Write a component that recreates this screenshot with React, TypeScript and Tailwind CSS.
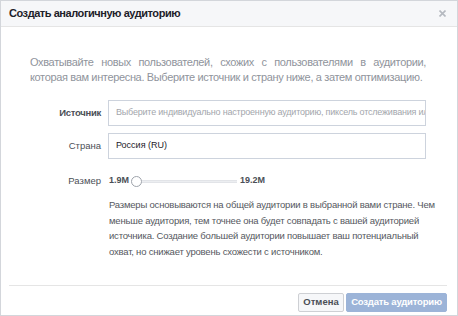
import React from 'react';

const font = { fontFamily: '"Liberation Sans", Arial, sans-serif' };

const Row: React.FC<{ label: string; bold?: boolean; children: React.ReactNode; className?: string; labelClass?: string }> = ({
  label,
  bold,
  children,
  className,
  labelClass,
}) => (
  <div className={`flex items-center ${className ?? ''}`}>
    <div className={`w-[71px] mr-[7px] text-right text-[#4b4f56] ${bold ? 'font-bold' : ''} ${labelClass ?? ''}`}>{label}</div>
    <div className="flex-1 min-w-0">{children}</div>
  </div>
);

export default function App() {
  return (
    <div className="w-[458px] h-[316px] bg-white border border-[#d3d6db] flex flex-col overflow-hidden" style={font}>
      {/* Header */}
      <div className="h-[26px] shrink-0 bg-[#f6f7f9] border-b border-[#e5e5e5] flex items-center justify-between pl-[8px] pr-[11px]">
        <span className="text-[11px] font-bold tracking-[-0.45px] text-[#1d2129]">Создать аналогичную аудиторию</span>
        <svg width="7" height="7" viewBox="0 0 7 7" className="text-[#b5b9c0]">
          <path d="M0.5 0.5L6.5 6.5M6.5 0.5L0.5 6.5" stroke="currentColor" strokeWidth="1.6" />
        </svg>
      </div>

      {/* Body */}
      <div className="flex-1 pl-[29px] pr-[31px] pt-[28px]">
        <div className="text-[11px] leading-[15px] tracking-[-0.35px] text-[#90949c]">
          <p className="text-justify [text-align-last:justify]">
            Охватывайте новых пользователей, схожих с пользователями в аудитории,
          </p>
          <p>которая вам интересна. Выберите источник и страну ниже, а затем оптимизацию.</p>
        </div>

        <Row label="Источник" bold className="mt-[15px]" labelClass="text-[9.5px] tracking-[-0.3px]">
          <div className="h-[26px] border border-[#cdd3dd] flex items-center pl-[7px] overflow-hidden whitespace-nowrap text-[9px] tracking-[-0.2px] text-[#a3a6ac]">
            Выберите индивидуально настроенную аудиторию, пиксель отслеживания или
          </div>
        </Row>

        <Row label="Страна" className="mt-[7px]" labelClass="text-[9.5px]">
          <div className="h-[26px] border border-[#cdd3dd] flex items-center pl-[7px] text-[9px] text-[#1d2129]">
            Россия (RU)
          </div>
        </Row>

        <Row label="Размер" className="mt-[15px] h-[14px]" labelClass="text-[9.5px]">
          <div className="flex items-center pl-[1px] text-[9px] font-bold text-[#4b4f56]">
            <span className="w-[22px]">1.9M</span>
            <div className="flex items-center">
              <div className="w-[11px] h-[11px] rounded-full border border-[#9ea3ab] bg-white" />
              <div className="w-[95px] h-[3px] bg-[#eceef1] border-y border-[#e2e4e8]" />
            </div>
            <span className="ml-[3px]">19.2M</span>
          </div>
        </Row>

        <div className="ml-[79px] mt-[9px] text-[9.5px] leading-[15.5px] tracking-[-0.2px] text-[#55585e] whitespace-nowrap">
          Размеры основываются на общей аудитории в выбранной вами стране. Чем
          <br />
          меньше аудитория, тем точнее она будет совпадать с вашей аудиторией
          <br />
          источника. Создание большей аудитории повышает ваш потенциальный
          <br />
          охват, но снижает уровень схожести с источником.
        </div>
      </div>

      {/* Footer */}
      <div className="h-[30px] shrink-0 ml-[8px] mr-[10px] border-t border-[#e5e5e5] pt-[7px] flex justify-end items-start gap-[2px]">
        <button className="w-[46px] h-[19px] border border-[#ced0d4] bg-[#f6f7f9] text-[9.5px] font-bold text-[#4b4f56] rounded-[2px] flex items-center justify-center">
          Отмена
        </button>
        <button className="w-[101px] h-[19px] border border-[#9cb4d8] bg-[#9cb4d8] text-[9.5px] font-bold tracking-[-0.2px] text-white rounded-[2px] flex items-center justify-center">
          Создать аудиторию
        </button>
      </div>
    </div>
  );
}
